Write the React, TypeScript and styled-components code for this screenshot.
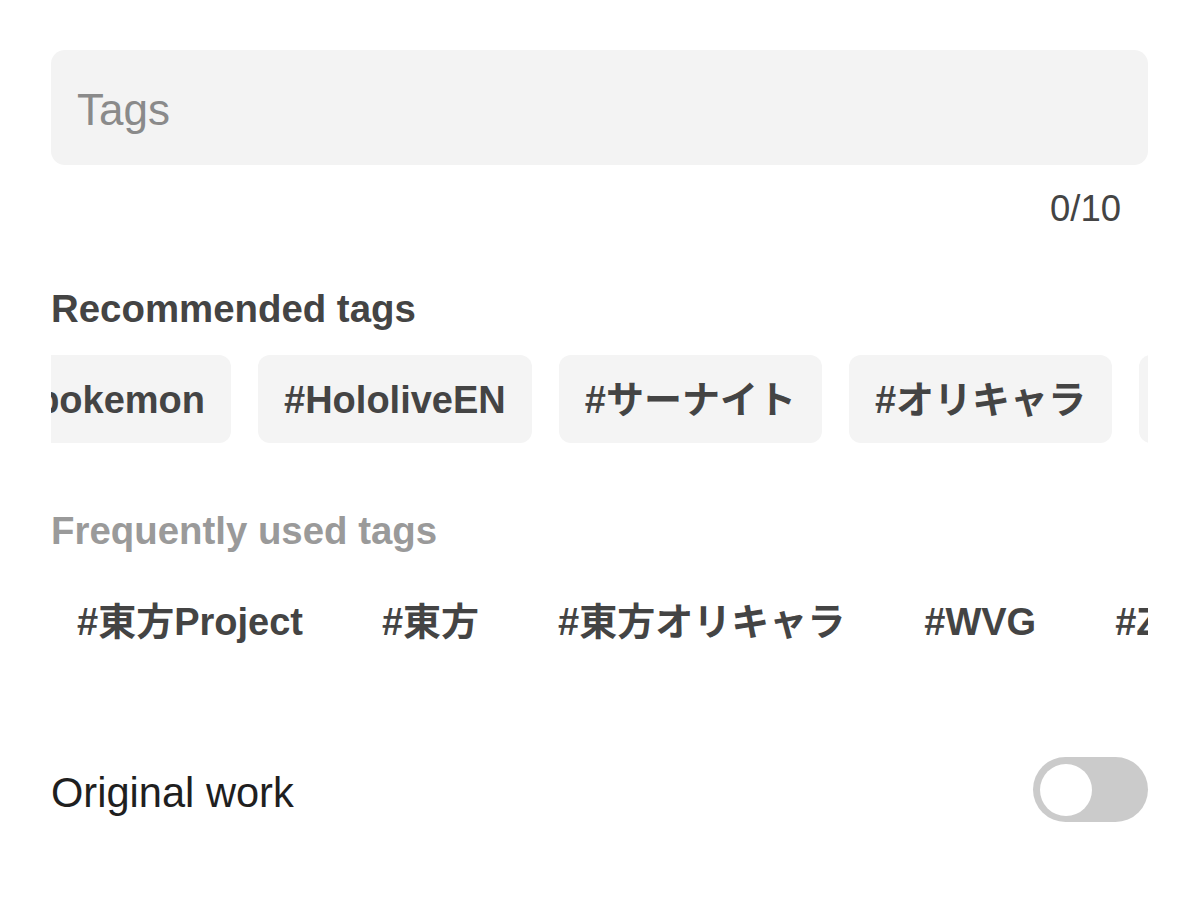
import React, { useLayoutEffect, useRef } from "react";
import styled, { createGlobalStyle } from "styled-components";

const GlobalStyle = createGlobalStyle`
  html, body {
    margin: 0;
    padding: 0;
    background: #ffffff;
  }
  body {
    font-family: "Liberation Sans", Arial, "Noto Sans CJK JP", sans-serif;
  }
  * { box-sizing: border-box; }
`;

const Page = styled.div`
  width: 1200px;
  height: 903px;
  padding: 50px 52px 0 51px;
  display: flex;
  flex-direction: column;
  font-family: "Liberation Sans", Arial, "Noto Sans CJK JP", sans-serif;
`;

const TagInput = styled.input`
  width: 100%;
  height: 115px;
  border: none;
  outline: none;
  border-radius: 14px;
  background: #f3f3f3;
  padding: 5px 26px 0;
  font-family: inherit;
  font-size: 44px;
  color: #333;
  &::placeholder {
    color: #8a8a8a;
  }
`;

const Counter = styled.div`
  align-self: flex-end;
  margin-top: 26px;
  margin-right: 27px;
  font-size: 36.5px;
  line-height: 36px;
  color: #444;
`;

const SectionTitle = styled.div<{ $muted?: boolean }>`
  margin-top: ${(p) => (p.$muted ? "69px" : "63px")};
  font-size: 38.4px;
  line-height: 38px;
  font-weight: 700;
  color: ${(p) => (p.$muted ? "#9a9a9a" : "#444")};
`;

const ChipRow = styled.div`
  margin-top: 27px;
  display: flex;
  gap: 27px;
  overflow-x: auto;
  scrollbar-width: none;
  &::-webkit-scrollbar { display: none; }
`;

const Chip = styled.div<{ $plain?: boolean }>`
  flex: none;
  height: 88px;
  padding: 2px 26px 0;
  display: flex;
  align-items: center;
  border-radius: 12px;
  background: ${(p) => (p.$plain ? "transparent" : "#f4f4f4")};
  font-size: 38px;
  line-height: 38px;
  font-weight: 700;
  color: #444;
  white-space: nowrap;
`;

const SettingRow = styled.div`
  margin-top: 92px;
  display: flex;
  align-items: center;
  justify-content: space-between;
`;

const SettingLabel = styled.div`
  font-size: 41.6px;
  line-height: 41px;
  color: #1f1f1f;
  padding-top: 6px;
`;

const Track = styled.div`
  width: 115px;
  height: 65px;
  border-radius: 33px;
  background: #cbcbcb;
  padding: 6px 7px;
  display: flex;
  align-items: center;
`;

const Knob = styled.div`
  width: 52px;
  height: 52px;
  border-radius: 50%;
  background: #ffffff;
`;

const recommended = ["#pokemon", "#HololiveEN", "#サーナイト", "#オリキャラ", "#ホロライブ"];
const frequent = ["#東方Project", "#東方", "#東方オリキャラ", "#WVG", "#ZUN"];

export default function App() {
  const recRef = useRef<HTMLDivElement>(null);
  useLayoutEffect(() => {
    if (recRef.current) recRef.current.scrollLeft = 62;
  }, []);
  return (
    <>
      <GlobalStyle />
      <Page>
        <TagInput placeholder="Tags" />
        <Counter>0/10</Counter>
        <SectionTitle>Recommended tags</SectionTitle>
        <ChipRow ref={recRef}>
          {recommended.map((t) => (
            <Chip key={t}>{t}</Chip>
          ))}
        </ChipRow>
        <SectionTitle $muted>Frequently used tags</SectionTitle>
        <ChipRow>
          {frequent.map((t) => (
            <Chip key={t} $plain>
              {t}
            </Chip>
          ))}
        </ChipRow>
        <SettingRow>
          <SettingLabel>Original work</SettingLabel>
          <Track>
            <Knob />
          </Track>
        </SettingRow>
      </Page>
    </>
  );
}
